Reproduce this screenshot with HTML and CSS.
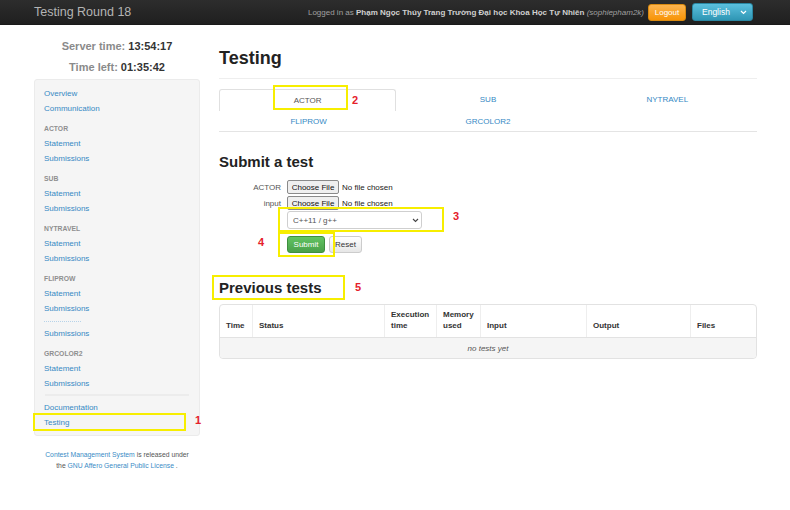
FILE: index.html
```html
<!DOCTYPE html>
<html>
<head>
<meta charset="utf-8">
<link rel="stylesheet" href="styles.css">
</head>
<body>
<div class="page">
  <header class="navbar">
    <div class="brand">Testing Round 18</div>
    <div class="nav-right">
      <span class="login">Logged in as <b>Phạm Ngọc Thúy Trang Trường Đại học Khoa Học Tự Nhiên</b> <i>(sophiepham2k)</i></span>
      <button class="btn-logout">Logout</button>
      <span class="lang">English
        <svg class="lang-caret" width="7" height="5" viewBox="0 0 7 5"><path d="M1 1 L3.5 3.5 L6 1" fill="none" stroke="#fff" stroke-width="1.2"/></svg>
      </span>
    </div>
  </header>

  <div class="layout">
    <aside class="sidebar">
      <div class="times">
        <div><span class="tl">Server time:</span> <span class="tv">13:54:17</span></div>
        <div><span class="tl">Time left:</span> <span class="tv">01:35:42</span></div>
      </div>
      <nav class="well">
        <a class="item">Overview</a>
        <a class="item">Communication</a>
        <div class="hdr">ACTOR</div>
        <a class="item">Statement</a>
        <a class="item">Submissions</a>
        <div class="hdr">SUB</div>
        <a class="item">Statement</a>
        <a class="item">Submissions</a>
        <div class="hdr">NYTRAVEL</div>
        <a class="item">Statement</a>
        <a class="item">Submissions</a>
        <div class="hdr">FLIPROW</div>
        <a class="item">Statement</a>
        <a class="item">Submissions</a>
        <div class="glitch"></div>
        <a class="item">Submissions</a>
        <div class="hdr">GRCOLOR2</div>
        <a class="item">Statement</a>
        <a class="item">Submissions</a>
        <div class="divider"></div>
        <a class="item">Documentation</a>
        <a class="item">Testing</a>
      </nav>
      <footer class="foot">
        <div><a>Contest Management System</a> is released under</div>
        <div>the <a>GNU Affero General Public License</a> .</div>
      </footer>
    </aside>

    <main class="main">
      <h1 class="title">Testing</h1>
      <hr class="rule">
      <div class="tabs">
        <div class="tab active">ACTOR</div>
        <div class="tab">SUB</div>
        <div class="tab">NYTRAVEL</div>
        <div class="tab row2">FLIPROW</div>
        <div class="tab row2">GRCOLOR2</div>
        <div class="tab row2"></div>
      </div>

      <h2 class="sub">Submit a test</h2>
      <form class="form">
        <label class="lbl">ACTOR</label>
        <input type="file" class="file">
        <label class="lbl">input</label>
        <input type="file" class="file">
        <span></span>
        <span class="sel-wrap">
          <select class="sel"><option>C++11 / g++</option></select>
          <svg class="sel-caret" width="7" height="5" viewBox="0 0 7 5"><path d="M1 1 L3.5 3.5 L6 1" fill="none" stroke="#444" stroke-width="1.1"/></svg>
        </span>
        <span></span>
        <div class="btns">
          <button type="button" class="btn-submit">Submit</button>
          <button type="button" class="btn-reset">Reset</button>
        </div>
      </form>

      <h2 class="sub prev">Previous tests</h2>
      <table class="tbl">
        <colgroup>
          <col style="width:32px"><col style="width:132px"><col style="width:52px"><col style="width:44px"><col style="width:106px"><col style="width:104px"><col style="width:66px">
        </colgroup>
        <thead>
          <tr><th>Time</th><th>Status</th><th>Execution time</th><th>Memory used</th><th>Input</th><th>Output</th><th>Files</th></tr>
        </thead>
        <tbody>
          <tr><td colspan="7" class="empty">no tests yet</td></tr>
        </tbody>
      </table>
    </main>
  </div>

  <div class="mark m1"></div>
  <div class="mark m2"></div>
  <div class="mark m3"></div>
  <div class="mark m4"></div>
  <div class="mark m5"></div>
  <span class="num n1">1</span>
  <span class="num n2">2</span>
  <span class="num n3">3</span>
  <span class="num n4">4</span>
  <span class="num n5">5</span>
</div>
</body>
</html>
```

FILE: styles.css
```css
* { box-sizing: border-box; }
html, body { margin: 0; padding: 0; background: #fff; }
body { font-family: "Liberation Sans", Arial, sans-serif; font-size: 8px; color: #333; }
a { color: #3a8cc6; text-decoration: none; }

.page { position: relative; width: 790px; min-height: 510px; }

.navbar {
  height: 25px;
  background: linear-gradient(#2d2d2d, #1f1f1f);
  border-bottom: 1px solid #1a1a1a;
  display: flex;
  align-items: center;
  justify-content: space-between;
  padding: 0 37px 0 34px;
}
.brand { color: #b4b4b4; font-size: 12.5px; }
.nav-right { display: flex; align-items: center; }
.login { color: #a0a0a0; font-size: 8px; margin-right: 4px; }
.login b { color: #d0d0d0; }
.login i { color: #a0a0a0; }
.btn-logout {
  height: 17px; width: 38px; padding: 0;
  font: 8px "Liberation Sans", Arial, sans-serif; color: #fff;
  background: linear-gradient(#fbb450, #f89406);
  border: 1px solid #d98a10; border-radius: 3px;
  margin-right: 6px;
}
.lang {
  position: relative;
  height: 18px; width: 61px;
  background: linear-gradient(#5bc0de, #2f96b4);
  border: 1px solid #2a87a2; border-radius: 3px;
  color: #fff; font-size: 8.5px;
  display: flex; align-items: center; padding-left: 9px;
}
.lang-caret { position: absolute; right: 5px; top: 6px; }

.layout { display: flex; gap: 19px; margin-left: 34px; }
.sidebar { width: 166px; flex: none; }
.times { padding-top: 11px; text-align: center; font-size: 11px; font-weight: bold; line-height: 21px; }
.tl { color: #8a8a8a; }
.tv { color: #333; }

.well {
  margin-top: 1px;
  background: #f5f5f5;
  border: 1px solid #ebebeb;
  border-radius: 3px;
  padding: 6px 0 5px 9px;
  display: flex; flex-direction: column;
}
.item { display: block; line-height: 15px; height: 15px; font-size: 8px; color: #3589c4; }
.hdr { margin-top: 5px; line-height: 15px; height: 15px; font-size: 6.8px; font-weight: bold; color: #8f8f8f; }
.glitch { height: 10px; margin-top: 0; position: relative; }
.glitch::after { content: ""; position: absolute; left: 0; top: 5px; width: 37px; border-top: 1px dotted #b7d3e9; }
.divider { margin: 3px 10px 4px 1px; border-top: 2px solid #ececec; }

.foot { margin-top: 13px; text-align: center; font-size: 6.8px; line-height: 11px; color: #555; }
.foot a { color: #3a8cc6; }

.main { width: 538px; flex: none; }
.title { margin: 22px 0 0; font-size: 18px; line-height: 22px; font-weight: bold; color: #222; }
.rule { margin: 9px 0 0; border: 0; border-top: 1px solid #eee; height: 0; }
.tabs {
  margin-top: 10px;
  display: grid; grid-template-columns: repeat(3, 1fr);
  border-bottom: 1px solid #e4e4e4;
}
.tab { height: 22px; line-height: 22px; text-align: center; color: #3589c4; font-size: 8px; }
.tab.row2 { height: 20px; line-height: 22px; }
.tab.active {
  color: #555;
  border: 1px solid #e0e0e0; border-bottom: 0;
  border-radius: 3px 3px 0 0;
  margin-right: 2px;
  line-height: 21px;
}

.sub { margin: 21px 0 0; font-size: 15px; line-height: 18px; font-weight: bold; color: #222; }
.form {
  margin-top: 9px;
  display: grid;
  grid-template-columns: 62px auto;
  column-gap: 6px;
  row-gap: 2px;
  align-items: center;
}
.lbl { text-align: right; color: #555; font-size: 8px; }
.file { font: 8px "Liberation Sans", Arial, sans-serif; color: #222; width: 150px; height: 14px; }
.file::file-selector-button {
  font: 8px "Liberation Sans", Arial, sans-serif;
  height: 14px; width: 52px; padding: 0;
  margin-right: 3px;
  background: #efefef; border: 1px solid #8a8a8a; border-radius: 2px; color: #111;
}
.sel-wrap { position: relative; width: 135px; height: 18px; margin-top: -1px; }
.sel {
  -webkit-appearance: none; appearance: none;
  width: 135px; height: 18px;
  border: 1px solid #cfcfcf; border-radius: 3px;
  background: #fff; color: #555;
  font: 8px "Liberation Sans", Arial, sans-serif;
  padding: 0 0 0 5px;
}
.sel-caret { position: absolute; right: 3px; top: 7px; }
.btns { display: flex; gap: 4px; margin-top: 5px; }
.btn-submit {
  width: 38px; height: 17px; padding: 0;
  font: 8px "Liberation Sans", Arial, sans-serif; color: #fff;
  background: linear-gradient(#62c462, #4aa04a);
  border: 1px solid #3f8f3f; border-radius: 3px;
}
.btn-reset {
  width: 33px; height: 17px; padding: 0;
  font: 8px "Liberation Sans", Arial, sans-serif; color: #333;
  background: linear-gradient(#fff, #e6e6e6);
  border: 1px solid #ccc; border-radius: 3px;
}

.prev { margin-top: 26px; }
.tbl {
  margin-top: 7px;
  width: 536px;
  table-layout: fixed;
  border-collapse: separate; border-spacing: 0;
  border: 1px solid #e2e2e2; border-radius: 4px;
  font-size: 8px;
}
.tbl th {
  text-align: left; vertical-align: bottom;
  font-weight: bold; color: #333;
  padding: 4px 6px 6px; line-height: 11px;
  border-left: 1px solid #eee;
}
.tbl th:first-child { border-left: 0; }
.tbl td.empty {
  height: 21px;
  text-align: center; font-style: italic; color: #555;
  background: #f5f5f5; border-top: 1px solid #e2e2e2;
  border-radius: 0 0 4px 4px;
}

.mark { position: absolute; border: 2px solid #f7ee00; }
.m1 { left: 33px; top: 413px; width: 153px; height: 18px; }
.m2 { left: 273px; top: 85px; width: 75px; height: 25px; }
.m3 { left: 278px; top: 207px; width: 166px; height: 25px; }
.m4 { left: 278px; top: 232px; width: 57px; height: 25px; }
.m5 { left: 212px; top: 275px; width: 133px; height: 25px; }
.num { position: absolute; color: #e5202a; font-weight: bold; font-size: 11px; line-height: 12px; }
.n1 { left: 195px; top: 414px; }
.n2 { left: 352px; top: 94px; }
.n3 { left: 453px; top: 210px; }
.n4 { left: 258px; top: 236px; }
.n5 { left: 355px; top: 281px; }
```
